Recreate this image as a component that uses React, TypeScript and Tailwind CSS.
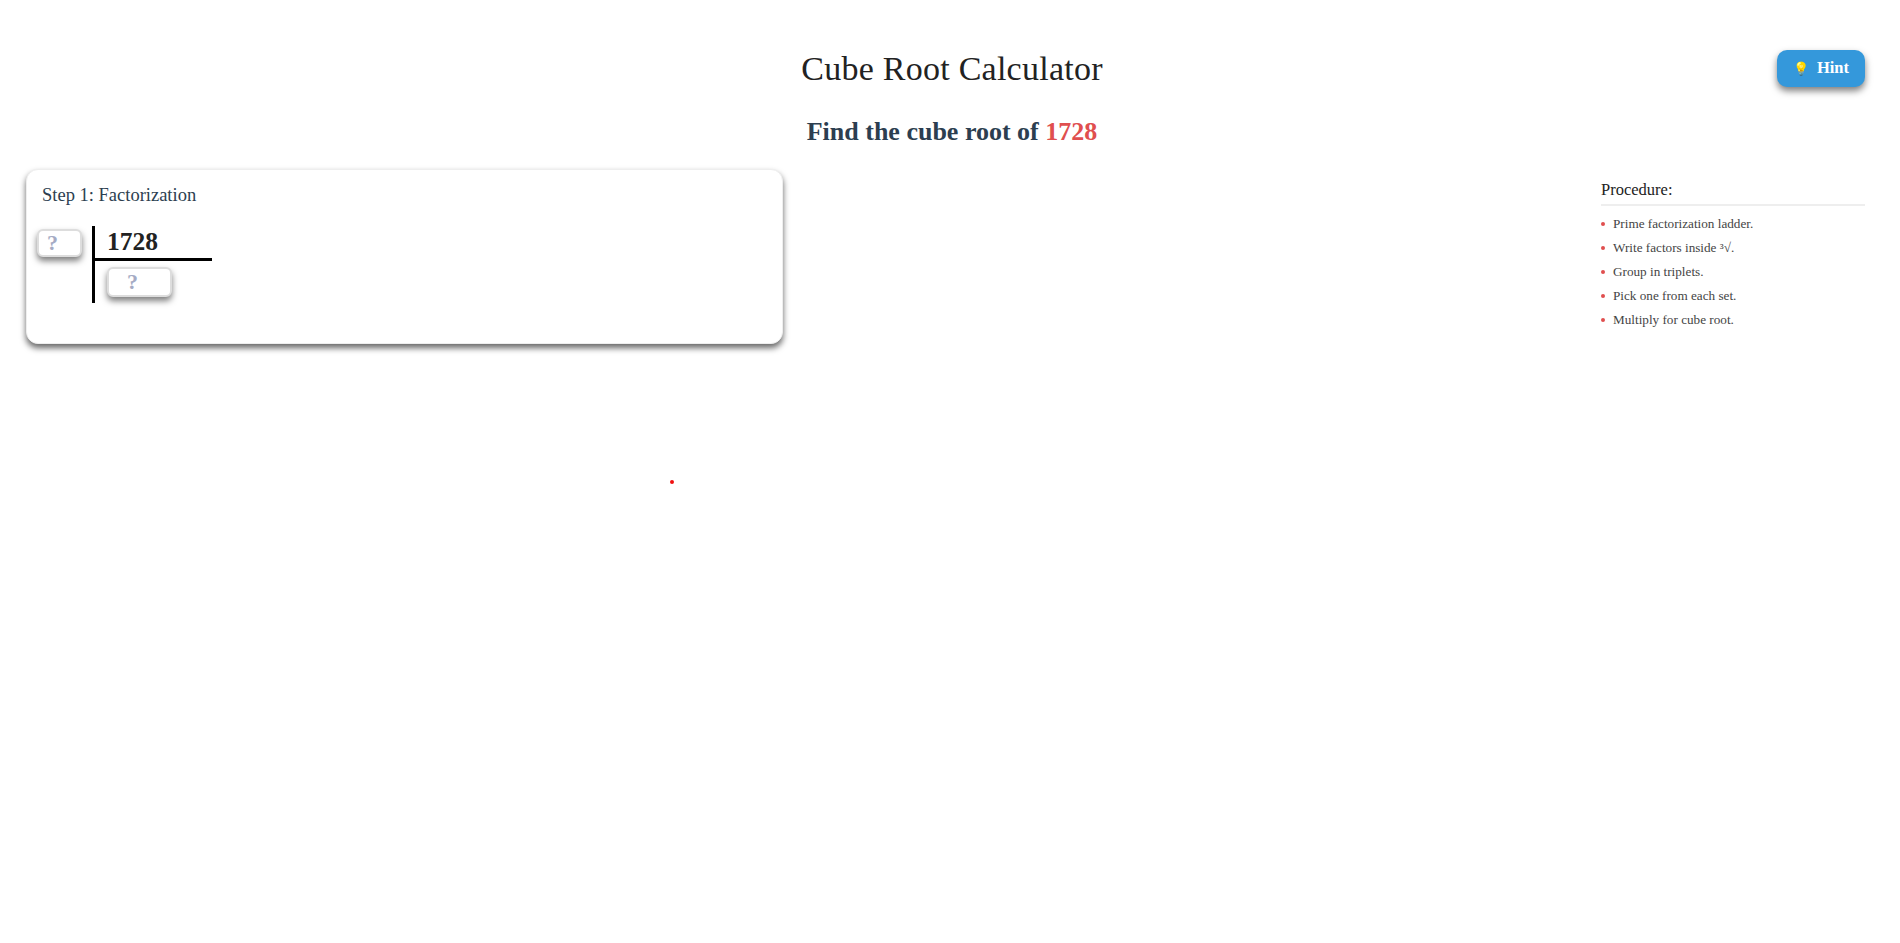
const steps = [
  "Prime factorization ladder.",
  "Write factors inside ³√.",
  "Group in triplets.",
  "Pick one from each set.",
  "Multiply for cube root.",
];

export default function App() {
  return (
    <div className="relative min-h-[943px] bg-white font-['Liberation_Serif',serif] text-[#222]">
      <div className="flex flex-col pl-[26px] pr-[35px] pt-[48px]">
        {/* Header */}
        <div className="flex items-start">
          <h1 className="flex-1 pl-[101px] text-center text-[34px] leading-[42px] tracking-[0.25px] text-[#222]">
            Cube Root Calculator
          </h1>
          <button className="mt-[2px] flex h-[37px] w-[88px] items-center justify-center gap-[8px] rounded-[10px] bg-[#3498db] text-[16.5px] font-bold text-white shadow-[0_4px_7px_rgba(0,0,0,0.5)]">
            <span className="text-[13px]">💡</span>
            Hint
          </button>
        </div>

        <h2 className="mt-[26px] pl-[13px] text-center text-[26px] font-bold leading-[32px] text-[#2c3e50]">
          Find the cube root of <span className="text-[#e04f4f]">1728</span>
        </h2>

        <div className="mt-[21px] flex items-start justify-between">
          {/* Step card */}
          <div className="h-[175px] w-[757px] rounded-xl border border-[#eee] bg-white px-[15px] pt-[13px] shadow-[0_4px_6px_rgba(0,0,0,0.6)]">
            <div className="text-[18.5px] leading-[24px] text-[#2c3e50]">Step 1: Factorization</div>
            <div className="-ml-[5px] mt-[19px] flex">
              <div className="mr-[10px] mt-[3px] flex h-[28px] w-[45px] items-center rounded-md border-2 border-[#ddd] bg-white pb-[2px] pl-[8px] text-[22px] font-bold text-[#a5abc4] shadow-[0_4px_6px_rgba(0,0,0,0.5)]">
                ?
              </div>
              <div className="h-[77px] border-l-[3px] border-black">
                <div className="h-[35px] w-[117px] border-b-[3px] border-black pl-[12px] text-[25.5px] font-bold leading-[32px]">
                  1728
                </div>
                <div className="ml-[12px] mt-[6px] flex h-[30px] w-[65px] items-center rounded-md border-2 border-[#ddd] bg-white pb-[1px] pl-[18px] text-[22px] font-bold text-[#a5abc4] shadow-[0_4px_6px_rgba(0,0,0,0.5)]">
                  ?
                </div>
              </div>
            </div>
          </div>

          {/* Procedure */}
          <div className="mt-[9px] w-[264px]">
            <div className="border-b-2 border-[#eee] pb-[2px] text-[16.5px] leading-[24px] text-[#222]">Procedure:</div>
            <ul className="mt-[6px] text-[13.2px] leading-[24px] text-[#444]">
              {steps.map((t) => (
                <li key={t} className="flex items-center gap-[8px]">
                  <span className="h-1 w-1 rounded-full bg-[#e04f4f]" />
                  {t}
                </li>
              ))}
            </ul>
          </div>
        </div>
      </div>
      <div className="absolute left-[670px] top-[480px] h-[4px] w-[4px] rounded-full bg-[#f01010]" />
    </div>
  );
}
